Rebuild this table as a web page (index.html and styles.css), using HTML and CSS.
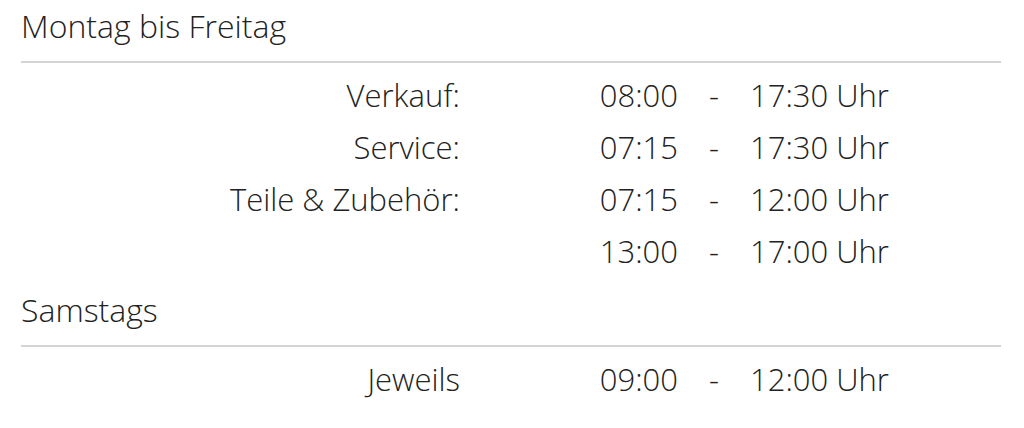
FILE: index.html
```html
<!DOCTYPE html>
<html lang="de">
<head>
<meta charset="utf-8">
<title>Öffnungszeiten</title>
<link rel="stylesheet" href="styles.css">
</head>
<body>
<div class="hours">
  <section class="block">
    <h2 class="day">Montag bis Freitag</h2>
    <div class="rows">
      <div class="label">Verkauf:</div><div class="from">08:00</div><div class="dash">-</div><div class="to">17:30 Uhr</div>
      <div class="label">Service:</div><div class="from">07:15</div><div class="dash">-</div><div class="to">17:30 Uhr</div>
      <div class="label">Teile &amp; Zubehör:</div><div class="from">07:15</div><div class="dash">-</div><div class="to">12:00 Uhr</div>
      <div class="label"></div><div class="from">13:00</div><div class="dash">-</div><div class="to">17:00 Uhr</div>
    </div>
  </section>
  <section class="block">
    <h2 class="day">Samstags</h2>
    <div class="rows">
      <div class="label">Jeweils</div><div class="from">09:00</div><div class="dash">-</div><div class="to">12:00 Uhr</div>
    </div>
  </section>
</div>
</body>
</html>
```
FILE: styles.css
```css
html, body {
  margin: 0;
  padding: 0;
  background: #fff;
}
body {
  font-family: "Open Sans", "Noto Sans", sans-serif;
  font-weight: 350;
  color: #222;
}
.hours {
  width: 980px;
  padding: 0 23px 0 21px;
}
.day {
  margin: 0;
  font-weight: 350;
  font-size: 32px;
  line-height: 52px;
  padding-bottom: 9px;
  border-bottom: 2px solid #d4d4d4;
}
.rows {
  display: grid;
  grid-template-columns: 439px 218px 72px 1fr;
  grid-auto-rows: 52px;
  align-items: center;
  padding: 6px 0 7px;
  font-size: 31px;
  line-height: 52px;
}
.label {
  text-align: right;
}
.from {
  text-align: right;
}
.dash {
  text-align: center;
}
.to {
  text-align: left;
}
```
